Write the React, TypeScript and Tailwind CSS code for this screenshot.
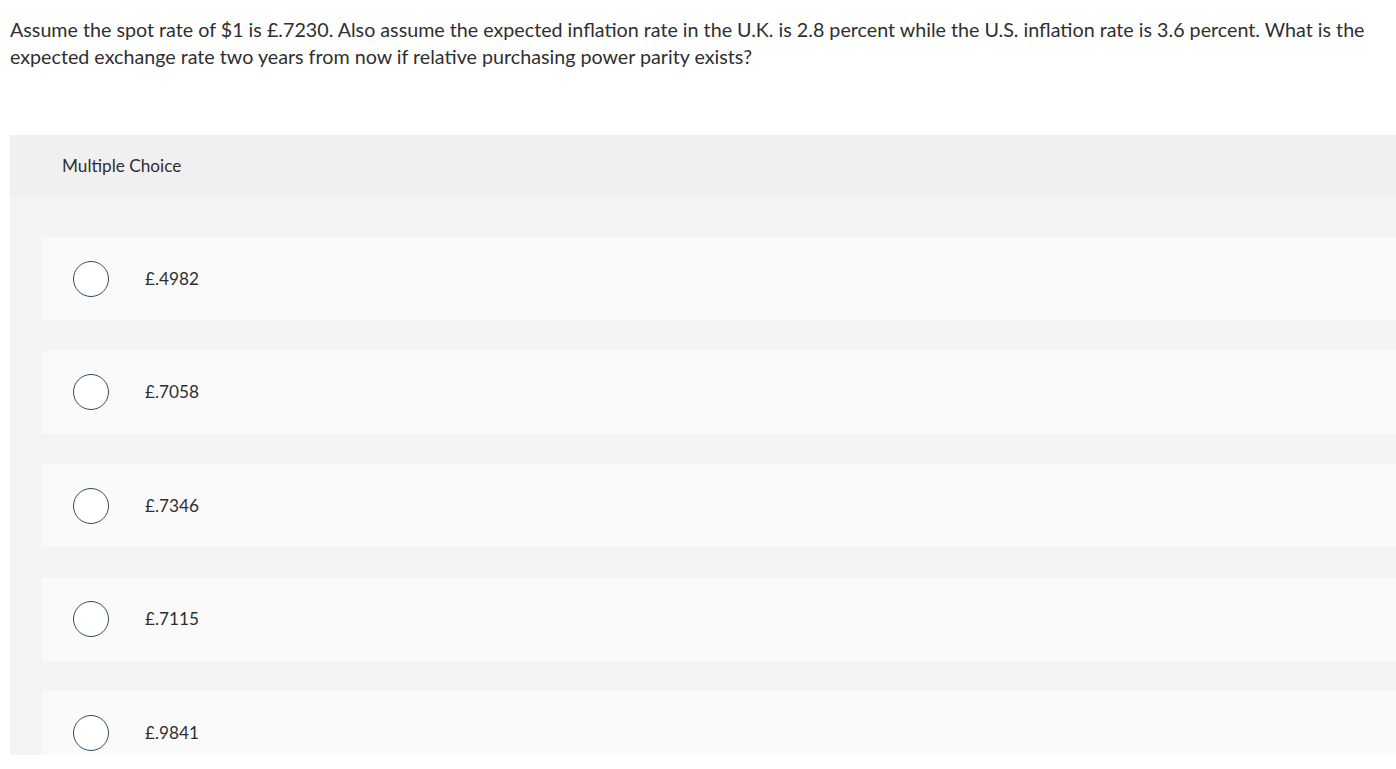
export default function App() {
  const options = ["£.4982", "£.7058", "£.7346", "£.7115", "£.9841"];
  return (
    <div className="w-[1396px] h-[769px] bg-white overflow-hidden" style={{ fontFamily: "Lato, 'Open Sans', sans-serif" }}>
      <div className="pl-[10px] pr-[20px] pt-[16px] text-[19.7px] leading-[27px] text-[#2f2f2f]">
        Assume the spot rate of $1 is £.7230. Also assume the expected inflation rate in the U.K. is 2.8 percent while the U.S. inflation rate is 3.6 percent. What is the expected exchange rate two years from now if relative purchasing power parity exists?
      </div>
      <div className="ml-[10px] mt-[65px] h-[620px] overflow-hidden flex flex-col">
        <div className="h-[62px] shrink-0 bg-[#f0f0f0] flex items-center pl-[52px] text-[17.2px] text-[#2f2f2f]">
          Multiple Choice
        </div>
        <div className="flex-1 bg-[#f4f4f4] pl-[32px] pt-[40px] flex flex-col gap-[30.5px]">
          {options.map((o) => (
            <div key={o} className="h-[83px] shrink-0 bg-[#fafafa] flex items-center">
              <div className="ml-[31px] w-[36px] h-[36px] rounded-full border-[1.5px] border-[#2f4b5f] bg-white shrink-0" />
              <div className="ml-[36px] text-[17.2px] text-[#2f2f2f]">{o}</div>
            </div>
          ))}
        </div>
      </div>
    </div>
  );
}
